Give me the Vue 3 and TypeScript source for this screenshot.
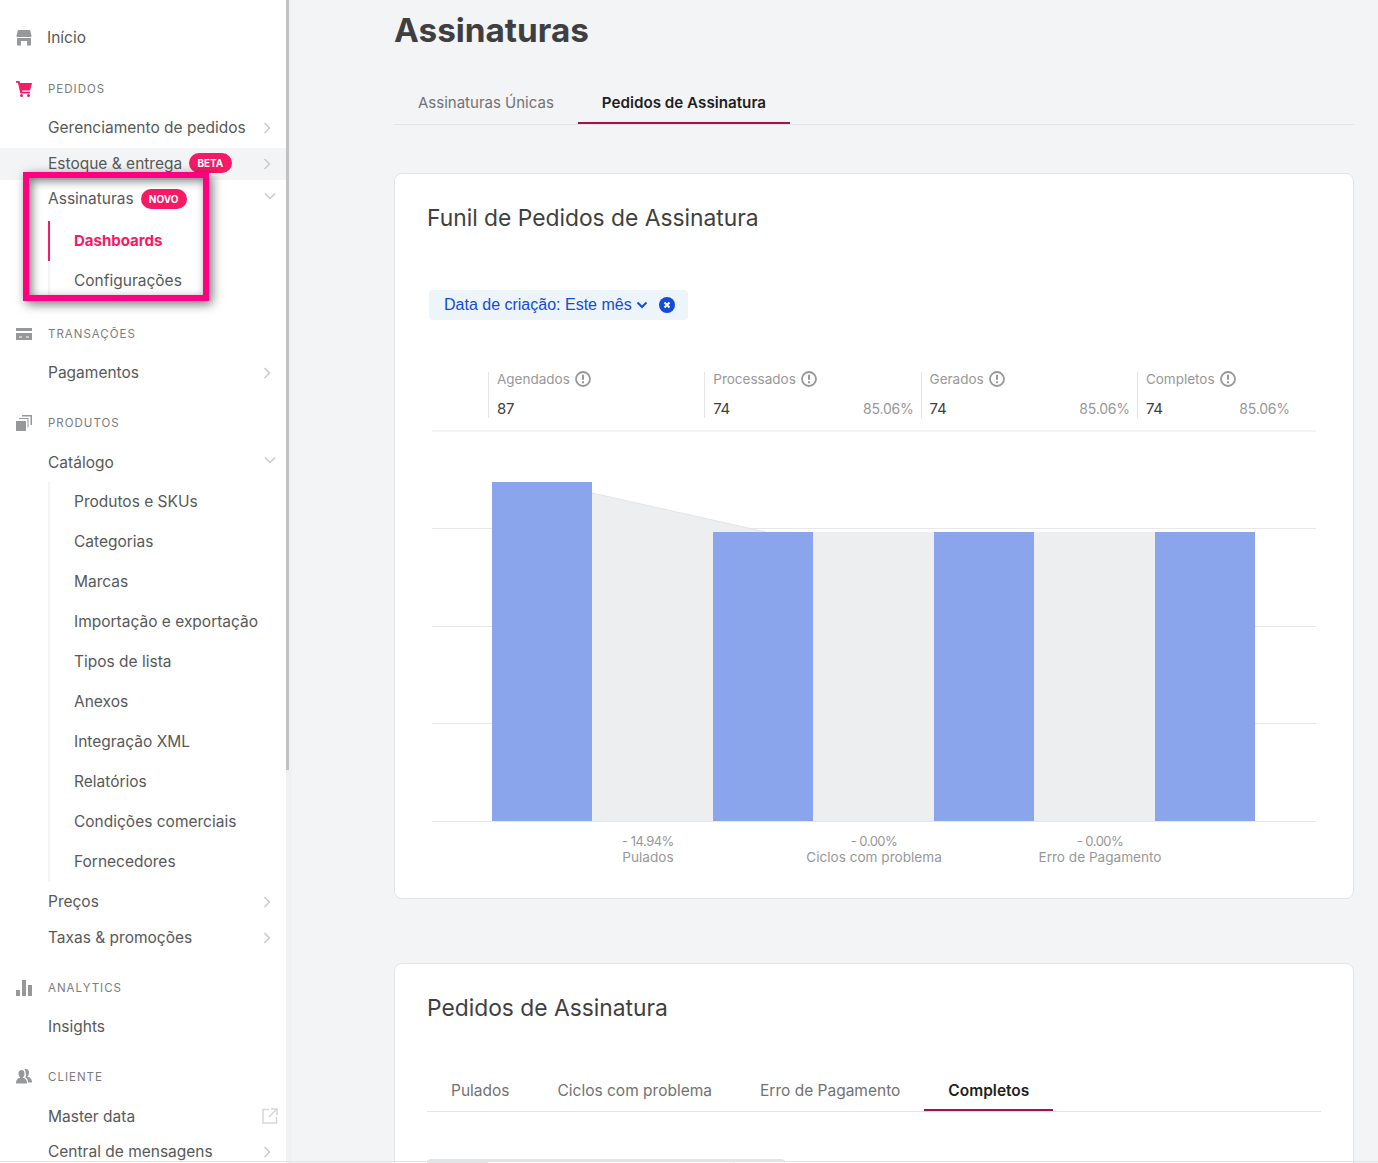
<script setup lang="ts">
type Item = { label: string; arrow?: 'right' | 'down' | 'ext'; badge?: string; hover?: boolean; sub?: { label: string; active?: boolean }[] }
type Section = { title: string; icon: string; active?: boolean; items: Item[] }

const sections: Section[] = [
  {
    title: 'PEDIDOS',
    icon: 'cart',
    active: true,
    items: [
      { label: 'Gerenciamento de pedidos', arrow: 'right' },
      { label: 'Estoque & entrega', arrow: 'right', badge: 'BETA', hover: true },
      {
        label: 'Assinaturas',
        arrow: 'down',
        badge: 'NOVO',
        sub: [{ label: 'Dashboards', active: true }, { label: 'Configurações' }],
      },
    ],
  },
  { title: 'TRANSAÇÕES', icon: 'card', items: [{ label: 'Pagamentos', arrow: 'right' }] },
  {
    title: 'PRODUTOS',
    icon: 'box',
    items: [
      {
        label: 'Catálogo',
        arrow: 'down',
        sub: [
          'Produtos e SKUs',
          'Categorias',
          'Marcas',
          'Importação e exportação',
          'Tipos de lista',
          'Anexos',
          'Integração XML',
          'Relatórios',
          'Condições comerciais',
          'Fornecedores',
        ].map((label) => ({ label })),
      },
      { label: 'Preços', arrow: 'right' },
      { label: 'Taxas & promoções', arrow: 'right' },
    ],
  },
  { title: 'ANALYTICS', icon: 'chart', items: [{ label: 'Insights' }] },
  {
    title: 'CLIENTE',
    icon: 'people',
    items: [
      { label: 'Master data', arrow: 'ext' },
      { label: 'Central de mensagens', arrow: 'right' },
    ],
  },
]

const stats = [
  { label: 'Agendados', value: '87', pct: '' },
  { label: 'Processados', value: '74', pct: '85.06%' },
  { label: 'Gerados', value: '74', pct: '85.06%' },
  { label: 'Completos', value: '74', pct: '85.06%' },
]

const drops = [
  { pct: '- 14.94%', label: 'Pulados' },
  { pct: '- 0.00%', label: 'Ciclos com problema' },
  { pct: '- 0.00%', label: 'Erro de Pagamento' },
]

const bars = [
  { x: 60, y: 50 },
  { x: 281, y: 100 },
  { x: 502, y: 100 },
  { x: 723, y: 100 },
]
const grid = [96, 194, 291, 389]
</script>

<template>
  <div class="page">
    <aside class="sidebar">
      <div class="home">
        <svg class="sec-icon" viewBox="0 0 16 16" width="16" height="16">
          <path d="M2 0h12l1.500 5.500-.2 1.500H.7L.5 5.500z M1 8h14v7.500h-4V11H5v4.500H1z" fill="#979899" />
        </svg>
        <span class="home-label">Início</span>
      </div>

      <section v-for="s in sections" :key="s.title" class="section">
        <div class="sec-title">
          <svg class="sec-icon" viewBox="0 0 16 16" width="16" height="16">
            <template v-if="s.icon === 'cart'">
              <path d="M0 0h3.500l.5 2H16l-2 7.500H6l.3 1.200H14V12.500H4.300L2 1.800H0z" fill="#f71963" />
              <circle cx="5.500" cy="14.500" r="1.500" fill="#f71963" />
              <circle cx="12.500" cy="14.500" r="1.500" fill="#f71963" />
            </template>
            <path v-else-if="s.icon === 'card'" d="M0 2h16v3H0z M0 7h16v7H0z M3 10.500v1h3v-1z M10 10.500v1h3v-1z" fill-rule="evenodd" fill="#979899" />
            <path v-else-if="s.icon === 'box'" d="M0 6h10v10H0z M3 3h9.500v9.500H11.500V4H3z M6 0h10v10h-1.500V1.500H6z" fill="#979899" />
            <path v-else-if="s.icon === 'chart'" d="M0 10h4v6H0z M6 0h4v16H6z M12 5h4v11h-4z" fill="#979899" />
            <path v-else d="M5.500 1c2 0 3 1.500 3 3.500S7.500 8.300 6.500 8.800c3 .5 4.500 2 4.500 5.700H0c0-3.700 1.500-5.200 4.500-5.700-1-.5-2-2.300-2-4.300S3.500 1 5.500 1z M10 0c2 0 3 1.500 3 3.500s-1 3.800-2 4.300c3 .5 5 2 5 5.700h-4c0-2.500-1-4-2.700-4.900C10 7.500 10.500 3 8.500.4 9 .1 9.500 0 10 0z" fill="#979899" />
          </svg>
          <span>{{ s.title }}</span>
        </div>

        <template v-for="item in s.items" :key="item.label">
          <div class="row" :class="{ hover: item.hover }">
            <span class="row-label">{{ item.label }}</span>
            <span v-if="item.badge" class="badge">{{ item.badge }}</span>
            <svg v-if="item.arrow === 'right'" class="arrow" viewBox="0 0 8 12" width="8" height="12">
              <path d="M1.500 1l5 5-5 5" fill="none" stroke="#c9cacc" stroke-width="1.500" />
            </svg>
            <svg v-else-if="item.arrow === 'down'" class="arrow down" viewBox="0 0 12 8" width="12" height="8">
              <path d="M1 1.500l5 5 5-5" fill="none" stroke="#c9cacc" stroke-width="1.500" />
            </svg>
            <svg v-else-if="item.arrow === 'ext'" class="arrow ext" viewBox="0 0 16 16" width="16" height="16">
              <path d="M7 1.500H1v13.500h13.500V9 M9 1h6v6 M15 1L7 9" fill="none" stroke="#d5d6d8" stroke-width="1.500" />
            </svg>
          </div>
          <ul v-if="item.sub" class="sub">
            <li v-for="c in item.sub" :key="c.label" :class="{ active: c.active }">{{ c.label }}</li>
          </ul>
        </template>
      </section>
    </aside>

    <main class="main">
      <h1>Assinaturas</h1>
      <nav class="tabs top-tabs">
        <span class="tab">Assinaturas Únicas</span>
        <span class="tab on">Pedidos de Assinatura</span>
      </nav>

      <article class="card funnel">
        <h2>Funil de Pedidos de Assinatura</h2>
        <div class="chip">
          <span>Data de criação: Este mês</span>
          <svg viewBox="0 0 12 8" width="12" height="8"><path d="M1.500 1.500L6 6l4.500-4.500" fill="none" stroke="#134cd8" stroke-width="2" /></svg>
          <svg class="chip-x" viewBox="0 0 16 16" width="16" height="16">
            <circle cx="8" cy="8" r="8" fill="#134cd8" />
            <path d="M5.500 5.500l5 5m0-5l-5 5" stroke="#fff" stroke-width="2" />
          </svg>
        </div>

        <div class="stats">
          <div v-for="st in stats" :key="st.label" class="stat">
            <div class="stat-label">
              {{ st.label }}
              <svg viewBox="0 0 16 16" width="16" height="16">
                <circle cx="8" cy="8" r="7" fill="none" stroke="#979899" stroke-width="1.800" />
                <path d="M8 3.800v5M8 10.200v2" stroke="#979899" stroke-width="2" />
              </svg>
            </div>
            <div class="stat-vals">
              <span class="val">{{ st.value }}</span>
              <span class="pct">{{ st.pct }}</span>
            </div>
          </div>
        </div>

        <svg class="chart" viewBox="0 0 884 392" width="884" height="392">
          <line v-for="g in grid" :key="g" x1="0" x2="884" :y1="g + 0.5" :y2="g + 0.5" stroke="#e7e8ea" stroke-width="1" />
          <path d="M160 61 L334 100 H823 V389 H160 Z" fill="#edeef0" />
          <path d="M160 61 L334 100" fill="none" stroke="#e3e4e6" stroke-width="1" />
          <rect v-for="b in bars" :key="b.x" :x="b.x" :y="b.y" width="100" :height="389 - b.y" fill="#8aa5ec" />
        </svg>

        <div class="drops">
          <div v-for="d in drops" :key="d.label" class="drop">
            <div class="drop-pct">{{ d.pct }}</div>
            <div>{{ d.label }}</div>
          </div>
        </div>
      </article>

      <article class="card orders">
        <h2>Pedidos de Assinatura</h2>
        <nav class="tabs card-tabs">
          <span class="tab">Pulados</span>
          <span class="tab">Ciclos com problema</span>
          <span class="tab">Erro de Pagamento</span>
          <span class="tab on">Completos</span>
        </nav>
        <div class="toolbar">
          <span class="seg first"></span>
          <span class="seg mid"></span>
          <span class="seg"></span>
        </div>
      </article>
    </main>

    <div class="scroll-track"></div>
    <div class="scroll-thumb"></div>
    <div class="callout"></div>
    <div class="edge"></div>
  </div>
</template>

<style>
html, body {
  margin: 0;
  height: 1163px;
  overflow: hidden;
  background: #f3f4f6;
}
</style>

<style scoped>
.page {
  position: relative;
  display: flex;
  height: 1163px;
  overflow: hidden;
  font-family: Inter, "Noto Sans", sans-serif;
  color: #585959;
}
.sidebar {
  width: 286px;
  height: 1163px;
  flex: none;
  background: #fff;
  box-sizing: border-box;
  padding: 19px 0 0;
  overflow: hidden;
}
.home {
  display: flex;
  align-items: center;
  height: 37px;
  padding-left: 16px;
}
.home-label {
  margin-left: 15px;
  font-size: 15.500px;
}
.sec-icon { flex: none; }
.section { padding-top: 11.500px; }
.sec-title {
  display: flex;
  align-items: center;
  height: 42.500px;
  padding-left: 16px;
  font-size: 11.500px;
  letter-spacing: 1px;
  color: #7b7c7e;
}
.sec-title span { margin-left: 16px; }
.row {
  position: relative;
  display: flex;
  align-items: center;
  height: 35.500px;
  padding-left: 48px;
  font-size: 15.500px;
}
.row.hover {
  background: linear-gradient(#f3f4f6, #f3f4f6) 0 2px / 100% 32px no-repeat;
}
.badge {
  margin-left: 7px;
  padding: 0 8.200px;
  height: 20px;
  line-height: 20px;
  border-radius: 10px;
  background: #f71963;
  color: #fff;
  font-size: 10px;
  font-weight: 700;
}
.arrow {
  position: absolute;
  right: 15px;
  top: 12px;
}
.arrow.down { right: 10px; top: 11px; }
.arrow.ext { right: 8px; top: 9px; }
.sub {
  list-style: none;
  margin: 0 0 2px 48px;
  padding: 2px 0 0;
  font-size: 15.500px;
}
.section:first-of-type .sub {
  margin-bottom: 0;
  padding-top: 4.500px;
}
.sub li {
  height: 40px;
  line-height: 40px;
  padding-left: 24px;
  border-left: 2px solid #f2f4f5;
  white-space: nowrap;
}
.sub li.active {
  border-left-color: #f71963;
  color: #f71963;
  font-size: 15px;
  font-weight: 700;
}
.main {
  width: 960px;
  margin-left: 108px;
  flex: none;
}
h1 {
  margin: 0;
  height: 60px;
  line-height: 60px;
  font-size: 33.300px;
  font-weight: 700;
  color: #3f3f40;
}
.tabs {
  display: flex;
  border-bottom: 1px solid #e3e4e6;
}
.tab {
  padding: 0 24px;
  font-size: 15px;
  color: #727273;
}
.tab.on {
  color: #1f1f21;
  font-size: 15.200px;
  font-weight: 600;
  box-shadow: inset 0 -2px 0 #aa1045;
}
.top-tabs {
  margin-top: 20px;
  height: 44px;
  line-height: 45px;
}
.card {
  box-sizing: border-box;
  position: relative;
  background: #fff;
  border: 1px solid #e3e4e6;
  border-radius: 8px;
  padding: 0 32px;
}
h2 {
  margin: 0;
  font-size: 22.800px;
  font-weight: 400;
  line-height: 30px;
  color: #3f3f40;
}
.funnel {
  height: 726px;
  margin-top: 48px;
  padding-top: 29px;
}
.chip {
  display: inline-flex;
  align-items: center;
  box-sizing: border-box;
  width: 259px;
  height: 30px;
  margin: 57px 0 0 2px;
  padding-left: 15px;
  border-radius: 4px;
  background: #edf4fa;
  color: #134cd8;
  font-family: "Liberation Sans", Arial, sans-serif;
  font-size: 16px;
  white-space: nowrap;
}
.chip svg { margin-left: 4px; }
.chip svg.chip-x { margin-left: 11px; }
.stats {
  display: flex;
  box-sizing: border-box;
  width: 884px;
  height: 60px;
  margin: 52px 0 0 5px;
  padding: 0 0 0 56px;
  border-bottom: 2px solid #f2f3f4;
}
.stat {
  box-sizing: border-box;
  width: 216.300px;
  height: 46px;
  padding: 0 7px 0 8px;
  border-left: 1px solid #e3e4e6;
}
.stat:last-child { width: 160px; }
.stat-label {
  display: flex;
  align-items: center;
  gap: 5px;
  height: 14px;
  font-size: 13.500px;
  color: #979899;
}
.stat-vals {
  display: flex;
  justify-content: space-between;
  margin-top: 13px;
  font-size: 15px;
  line-height: 20px;
}
.val {
  color: #3f3f40;
  letter-spacing: -0.300px;
}
.pct {
  color: #979899;
  font-size: 14px;
  letter-spacing: -0.200px;
}
.chart {
  display: block;
  margin: 0 0 0 5px;
}
.drops {
  position: relative;
  height: 36px;
}
.drop {
  position: absolute;
  top: 9px;
  width: 200px;
  text-align: center;
  font-size: 13.600px;
  line-height: 16px;
  color: #979899;
}
.drop-pct {
  font-size: 13px;
  letter-spacing: -0.500px;
}
.drop:nth-child(1) { left: 121px; }
.drop:nth-child(2) { left: 347px; }
.drop:nth-child(3) { left: 573px; }
.orders {
  height: 400px;
  margin-top: 64px;
  padding-top: 29px;
}
.card-tabs {
  width: 894px;
  margin-top: 47px;
  height: 41px;
  line-height: 41px;
}
.card-tabs .tab { font-size: 15.500px; }
.toolbar {
  display: flex;
  width: 358px;
  height: 20px;
  margin-top: 47px;
  border: 1px solid #e3e4e6;
  border-top-width: 2px;
  border-radius: 4px 4px 0 0;
  box-sizing: border-box;
}
.seg { height: 20px; width: 50px; }
.seg.first { width: 60px; background: #e3e4e6; }
.seg.mid { width: 246px; border-right: 1px solid #e3e4e6; }
.scroll-track {
  position: absolute;
  left: 286px;
  top: 0;
  bottom: 0;
  width: 6px;
  background: #f0f1f3;
}
.scroll-thumb {
  position: absolute;
  left: 286px;
  top: 0;
  width: 3px;
  height: 770px;
  background: #c1c1c1;
}
.callout {
  position: absolute;
  left: 23px;
  top: 172px;
  width: 186px;
  height: 129px;
  box-sizing: border-box;
  border: 6px solid #ff0080;
  box-shadow: 3px 3px 10px rgba(0, 0, 0, 0.55), inset 3px 3px 10px rgba(0, 0, 0, 0.5);
}
.edge {
  position: absolute;
  left: 0;
  right: 0;
  bottom: 1px;
  height: 1px;
  background: #e3e4e6;
}
</style>
